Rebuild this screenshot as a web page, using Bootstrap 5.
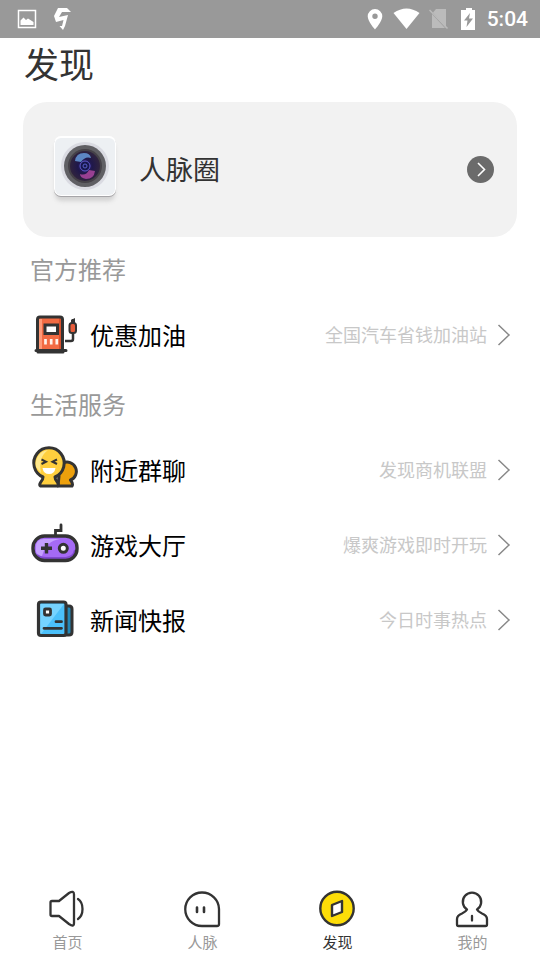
<!DOCTYPE html>
<html lang="zh-CN">
<head>
<meta charset="utf-8">
<meta name="viewport" content="width=device-width, initial-scale=1">
<title>发现</title>
<link href="https://cdn.jsdelivr.net/npm/bootstrap@5.3.0/dist/css/bootstrap.min.css" rel="stylesheet">
<style>
body { font-family: "Noto Sans CJK SC", sans-serif; color: #333; background: #fff; }
.status-bar { height: 38px; background: #999; padding: 0 12px 0 17px; color: #fff; }
.clock { font: 500 21px/38px Roboto, sans-serif; }
.page-title { font-size: 35px; line-height: 50px; font-weight: 400; margin: 0 24px 14px; color: #333; }
.circle-card { margin: 0 23px; padding: 0 23px 0 24px; height: 135px; border-radius: 24px; background: #f2f2f2; color: #333; }
.circle-name { font-size: 27px; margin-left: 16px; }
.section-title { font-size: 24px; line-height: 36px; font-weight: 400; margin: 0; padding: 14px 30px 10px; color: #999; }
.entry { height: 75px; padding: 0 29px 0 30px; color: #000; }
.entry-name { font-size: 24px; margin-left: 12px; }
.entry-note { font-size: 18px; color: #c8c8c8; margin-right: 10px; }
.tab-link { height: 75px; padding-top: 4px; color: #999; font-size: 15px; line-height: 22px; }
.tab-link svg { margin-bottom: 2px; }
.tab-link.current { color: #333; }
svg { flex: none; display: block; }
</style>
<script src="https://cdn.jsdelivr.net/npm/bootstrap@5.3.0/dist/js/bootstrap.bundle.min.js"></script>
</head>
<body class="d-flex flex-column min-vh-100">
<div class="status-bar d-flex align-items-center">
  <svg width="20" height="20" viewBox="0 0 20 20"><rect x="1.5" y="1.500" width="17" height="17" fill="none" stroke="#fff" stroke-width="1.5"/><path d="M3.500 16V11.500L6.500 8.500L9 11L11 9.500L16.500 13V16Z" fill="#fff"/></svg>
  <svg class="ms-3" width="20" height="24" viewBox="0 0 20 24"><path d="M5 1H14L18 5H9L6 10L15 8L12 19L10 23L6.500 19H9L10.500 13L3 15L1 9Z" fill="#fff"/></svg>
  <div class="ms-auto d-flex align-items-center">
    <svg width="16" height="22" viewBox="0 0 16 22"><path fill="#fff" fill-rule="evenodd" d="M8 1a7.300 7.300 0 0 0-7.300 7.300C.7 13.500 8 21.500 8 21.500S15.300 13.500 15.300 8.300A7.300 7.300 0 0 0 8 1ZM8 5.500a2.700 2.700 0 1 1 0 5.400a2.700 2.700 0 0 1 0-5.400Z"/></svg>
    <svg class="ms-2 me-1" width="34" height="22" viewBox="0 0 34 22"><path fill="#fff" d="M2.500 5Q15.500-4 28.500 5L15.500 21Z"/></svg>
    <svg width="20" height="22" viewBox="0 0 20 22"><path fill="#bbb" d="M7 1H17V20L4 4.500ZM3 6L16 20H3Z"/><path d="M.5 2L18.500 20.500" stroke="#bbb" stroke-width="1.500"/></svg>
    <svg class="ms-2 me-2" width="22" height="24" viewBox="0 0 22 24"><path fill="#fff" fill-rule="evenodd" d="M9 1h6v2h3v20H4V3h5ZM13 6L7 13.500h3.500L9.500 20L16 11.500h-4Z"/></svg>
    <span class="clock">5:04</span>
  </div>
</div>

<main class="flex-grow-1">
  <h1 class="page-title">发现</h1>
  <a href="#circle" class="circle-card d-flex align-items-center text-decoration-none">
    <svg width="76" height="76" viewBox="0 1 76 76">
      <defs>
        <radialGradient id="lens"><stop offset="0" stop-color="#2d2888"/><stop offset=".5" stop-color="#20184a"/><stop offset="1" stop-color="#30243e"/></radialGradient>
        <filter id="soft" x="-20%" y="-20%" width="140%" height="140%"><feGaussianBlur stdDeviation="2"/></filter>
      </defs>
      <rect x="8" y="12" width="60" height="58" rx="7" fill="#aaa" opacity=".45" filter="url(#soft)"/>
      <rect x="7" y="6" width="62" height="60" rx="7" fill="#a6a5a8"/>
      <rect x="7" y="5" width="62" height="60" rx="7" fill="#fff"/>
      <rect x="8" y="7" width="60" height="57" rx="6" fill="#edf0f3"/>
      <circle cx="38" cy="35" r="24" fill="#dadbe2"/>
      <circle cx="38" cy="35" r="21" fill="#606064"/>
      <circle cx="38" cy="35" r="17" fill="#454248"/>
      <circle cx="38" cy="35" r="15" fill="url(#lens)"/>
      <path d="M28 30Q29 22 37 22Q43 22 44 27Q38 25 34 31Z" fill="#5c87c3"/>
      <path d="M48 40Q47 48 39 48Q33 47 33 43Q39 45 42 39Z" fill="#984092"/>
      <circle cx="38" cy="35" r="5" fill="#17174e" stroke="#625acb"/>
      <circle cx="38" cy="35" r="2" fill="none" stroke="#5960c9"/>
    </svg>
    <span class="circle-name">人脉圈</span>
    <svg class="ms-auto" width="27" height="27" viewBox="0 0 27 27"><circle cx="13.500" cy="13.500" r="13.500" fill="#6b6b6b"/><path d="M11 7L17.500 13.500L11 20" fill="none" stroke="#fff" stroke-width="1.600"/></svg>
  </a>

  <section>
    <h2 class="section-title">官方推荐</h2>
    <a href="#fuel" class="entry d-flex align-items-center text-decoration-none">
      <svg width="48" height="48" viewBox="0 0 48 48">
        <rect x="7.500" y="6" width="25" height="34" rx="3" fill="#f26b43"/>
        <path d="M9 39V8H12V39Z" fill="#ff9a78"/><path d="M29 7H32V39H29Z" fill="#d8512e"/>
        <path d="M7.500 39V8.500Q7.500 6 10 6H30Q32.500 6 32.500 8.500V39M6 39.500H36M8 41H33" fill="none" stroke="#333" stroke-width="3" stroke-linecap="round"/>
        <rect x="15" y="14" width="12.500" height="8.500" fill="#fff" stroke="#333" stroke-width="3"/>
        <path d="M15.500 28V33.500M21.200 28V33.500M26.800 28V33.500" stroke="#fff3ea" stroke-width="2.700"/>
        <path d="M43 8V12M43 21V28Q43 30 41 30H35" fill="none" stroke="#333" stroke-width="2.500"/>
        <rect x="39.500" y="12" width="6.500" height="10" rx="2.500" fill="#e85d3b" stroke="#333" stroke-width="2"/>
        <path d="M41 9L45 7V12H41Z" fill="#333"/>
      </svg>
      <span class="entry-name">优惠加油</span>
      <span class="entry-note ms-auto">全国汽车省钱加油站</span>
      <svg width="14" height="22" viewBox="0 0 14 22"><path d="M1.500 1L12 11L1.500 21" fill="none" stroke="#888" stroke-width="1.500"/></svg>
    </a>
  </section>

  <section>
    <h2 class="section-title">生活服务</h2>
    <a href="#chat" class="entry d-flex align-items-center text-decoration-none">
      <svg width="48" height="48" viewBox="0 0 48 48">
        <path d="M28 40H42Q43.500 38 40.500 34A9.300 9.300 0 1 0 29 30Z" fill="#eda00c" stroke="#333" stroke-width="3" stroke-linejoin="round"/>
        <path d="M13 31Q13 34 10.500 36.500Q9 39 10.500 40H27.500Q29 39 27.500 36.500Q25 34 25 31A15.200 15.200 0 1 0 13 31Z" fill="#ffcf3e" stroke="#333" stroke-width="3" stroke-linejoin="round"/>
        <path d="M6 21A14 14 0 0 1 18 4Q8 11 11 27Z" fill="#ffe88c"/>
        <path d="M11.500 13.500L16 15.700L11.500 18M27 13.500L22.500 15.700L27 18" fill="none" stroke="#333" stroke-width="2"/>
        <path d="M12.500 22H25.500Q24.500 28 19 28T12.500 22Z" fill="#fff"/>
      </svg>
      <span class="entry-name">附近群聊</span>
      <span class="entry-note ms-auto">发现商机联盟</span>
      <svg width="14" height="22" viewBox="0 0 14 22"><path d="M1.500 1L12 11L1.500 21" fill="none" stroke="#888" stroke-width="1.500"/></svg>
    </a>
    <a href="#games" class="entry d-flex align-items-center text-decoration-none">
      <svg width="48" height="48" viewBox="0 0 48 48" overflow="visible">
        <path d="M25.500 14V9.500H31V4" fill="none" stroke="#333" stroke-width="2.800" stroke-linecap="round"/>
        <rect x="3" y="15" width="44" height="24.500" rx="11.500" fill="#a56af5"/>
        <path d="M6 31V26Q6 18 14 18H30Q16 20 12 35Q8 35 6 31Z" fill="#c5a0ff"/>
        <path d="M7 34Q10 37 16 37H36Q44 36 45 29" fill="none" stroke="#8149d0" stroke-width="2"/>
        <rect x="3" y="15" width="44" height="24.500" rx="11.500" fill="none" stroke="#333" stroke-width="3.400"/>
        <path d="M11 27.300H22M16.500 22V32.500" stroke="#333" stroke-width="3.400"/>
        <circle cx="33.300" cy="27.300" r="4" fill="#fff" stroke="#333" stroke-width="3"/>
      </svg>
      <span class="entry-name">游戏大厅</span>
      <span class="entry-note ms-auto">爆爽游戏即时开玩</span>
      <svg width="14" height="22" viewBox="0 0 14 22"><path d="M1.500 1L12 11L1.500 21" fill="none" stroke="#888" stroke-width="1.500"/></svg>
    </a>
    <a href="#news" class="entry d-flex align-items-center text-decoration-none">
      <svg width="48" height="48" viewBox="0 0 48 48">
        <path d="M35 10H39Q42 10 42 13V36Q42 39 39 39H35Z" fill="#2387b5" stroke="#333" stroke-width="3"/>
        <rect x="8.500" y="6" width="27.500" height="33.500" rx="2.500" fill="#4bc0fa"/>
        <path d="M10 8H34L11 38H10Z" fill="#75d3ff"/>
        <rect x="8.500" y="6" width="27.500" height="33.500" rx="2.500" fill="none" stroke="#333" stroke-width="3.200"/>
        <rect x="14.500" y="13" width="6" height="6" rx="1" fill="#fff" stroke="#333" stroke-width="2.800"/>
        <path d="M26 25.700H31.500M14 32.300H31.500" stroke="#333" stroke-width="2.800" stroke-linecap="round"/>
      </svg>
      <span class="entry-name">新闻快报</span>
      <span class="entry-note ms-auto">今日时事热点</span>
      <svg width="14" height="22" viewBox="0 0 14 22"><path d="M1.500 1L12 11L1.500 21" fill="none" stroke="#888" stroke-width="1.500"/></svg>
    </a>
  </section>
</main>

<nav class="sticky-bottom bg-white">
  <div class="row g-0 text-center">
    <a href="#home" class="col tab-link d-flex flex-column align-items-center text-decoration-none">
      <svg width="40" height="40" viewBox="1 0 40 40" fill="none" stroke="#333" stroke-width="2.300" stroke-linejoin="round" stroke-linecap="round"><path d="M5 12H12L22 4Q27 1 27 5.500V34Q27 38.500 22 35L12 27H5Q3.500 27 3.500 25.500V13.500Q3.500 12 5 12Z"/><path d="M31 10Q35.500 13 35.500 20T31 30"/></svg>
      <span>首页</span>
    </a>
    <a href="#contacts" class="col tab-link d-flex flex-column align-items-center text-decoration-none">
      <svg width="40" height="40" viewBox="1 0 40 40" fill="none" stroke="#333" stroke-width="2.300" stroke-linecap="round"><path d="M20 3.500A16.700 16.700 0 0 0 20 37H35Q37 37 37 35V20A17 16.700 0 0 0 20 3.500Z"/><path d="M15 18.500V23M22 18.500V23" stroke-width="2.600"/></svg>
      <span>人脉</span>
    </a>
    <a href="#discover" class="col tab-link current d-flex flex-column align-items-center text-decoration-none" aria-current="page">
      <svg width="40" height="40" viewBox="1 0 40 40"><circle cx="20" cy="19.500" r="16.700" fill="#fddd08" stroke="#333" stroke-width="2.400"/><path d="M15 16L25 12V23L15 27Z" fill="#fff" stroke="#333" stroke-width="2.400" stroke-linejoin="round"/></svg>
      <span>发现</span>
    </a>
    <a href="#me" class="col tab-link d-flex flex-column align-items-center text-decoration-none">
      <svg width="40" height="40" viewBox="1 0 40 40" fill="none" stroke="#333" stroke-width="2.300" stroke-linejoin="round" stroke-linecap="round"><path d="M15 20.500A9.200 9.200 0 1 1 25 20.500Q26 22.500 30 24.500Q35 26.500 35 30V35.500Q35 37 33.500 37H6.500Q5 37 5 35.500V30Q5 26.500 10 24.500Q14 22.500 15 20.500Z"/><path d="M20 27V31.500"/></svg>
      <span>我的</span>
    </a>
  </div>
</nav>
</body>
</html>
